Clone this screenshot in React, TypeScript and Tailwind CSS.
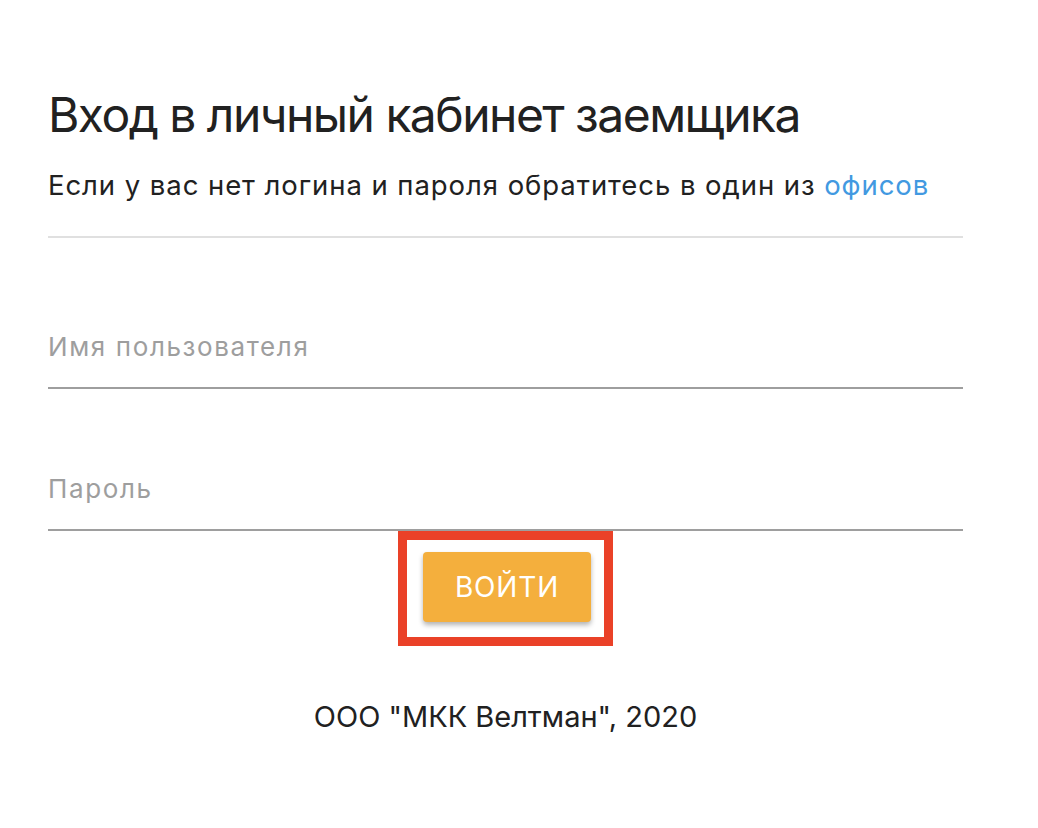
export default function App() {
  return (
    <div className="min-h-[828px] w-full bg-white" style={{ fontFamily: 'Inter, Roboto, "Noto Sans", sans-serif' }}>
      <div className="w-[915px] ml-[48px] pt-[87px]">
        <h1 className="text-[48px] leading-[56px] font-normal tracking-[-0.032em] text-[#212121]">Вход в личный кабинет заемщика</h1>
        <p className="mt-[24px] text-[27.5px] leading-[36px] tracking-[0.034em] text-[#212121]">
          Если у вас нет логина и пароля обратитесь в один из{" "}
          <a href="#" className="text-[#4299e1]">офисов</a>
        </p>
        <div className="mt-[33px] h-[2px] bg-[#e0e0e0]" />
        <form className="flex flex-col" onSubmit={(e) => e.preventDefault()}>
          <input
            type="text"
            placeholder="Имя пользователя"
            className="mt-[92px] block w-full h-[59px] pb-[25px] border-b-2 border-[#9e9e9e] text-[26px] leading-[32px] tracking-[0.062em] text-[#212121] placeholder:text-[#9e9e9e] outline-none bg-transparent"
          />
          <input
            type="password"
            placeholder="Пароль"
            className="mt-[83px] block w-full h-[59px] pb-[25px] border-b-2 border-[#9e9e9e] text-[26px] leading-[32px] tracking-[0.062em] text-[#212121] placeholder:text-[#9e9e9e] outline-none bg-transparent"
          />
          <div className="self-center w-[215px] h-[115px] border-[9px] border-[#ea4128] pt-[12px] pl-[16px]">
            <button
              type="submit"
              className="w-[168px] h-[70px] rounded-[4px] bg-[#f4af3d] text-white text-[28px] tracking-[0.03em] shadow-[0_3px_5px_rgba(0,0,0,0.3)]"
            >
              ВОЙТИ
            </button>
          </div>
        </form>
        <p className="mt-[53px] text-center text-[29px] leading-[36px] text-[#212121]">ООО "МКК Велтман", 2020</p>
      </div>
    </div>
  );
}
